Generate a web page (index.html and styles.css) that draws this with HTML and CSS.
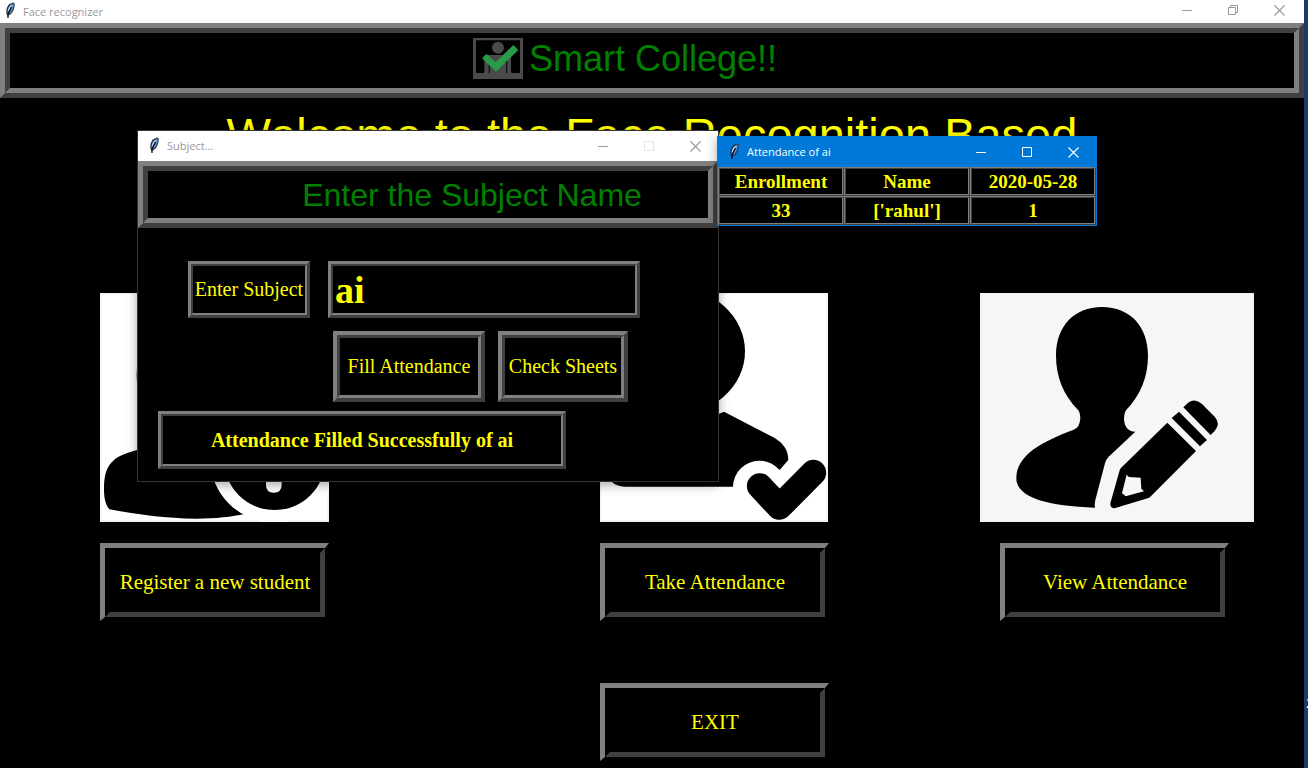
FILE: index.html
```html
<!DOCTYPE html>
<html lang="en">
<head>
<meta charset="utf-8">
<title>Face recognizer</title>
<link rel="stylesheet" href="styles.css">
</head>
<body>
<svg class="defs" aria-hidden="true">
  <symbol id="feather" viewBox="0 0 14 18">
    <path d="M4 13.500C2.500 9.500 3.500 5 6 2.500 8 .8 10 .5 11.500 .8 12.200 4.500 10.500 9.500 8 12 6.500 13.500 5.500 13.500 4 13.500z" fill="#26303f"/>
    <path d="M4.600 12C4 8 5.500 3.500 10.700 1.600 11 5 9.500 9 7 11.500z" fill="#5b96dc"/>
    <path d="M4.800 9.500C5 6.500 6.500 3.500 9.500 2.400L6 8.500z" fill="#c9def5"/>
    <path d="M8.500 5 5 12V16" fill="none" stroke="#000" stroke-width="1.200"/>
  </symbol>
  <symbol id="minimize" viewBox="0 0 11 11"><path d="M0 5.500h10" fill="none" stroke="currentColor"/></symbol>
  <symbol id="maximize" viewBox="0 0 11 11"><path d="M.5.500h9v9h-9z" fill="none" stroke="currentColor"/></symbol>
  <symbol id="restore" viewBox="0 0 11 11"><path d="M.5 2.500h7v7h-7zM2.500 2.500v-2h7v7h-2" fill="none" stroke="currentColor"/></symbol>
  <symbol id="close" viewBox="0 0 11 11"><path d="M.5.500l10 10M10.500.500l-10 10" fill="none" stroke="currentColor" stroke-width="1.100"/></symbol>
</svg>

<div class="desktop">
  <main class="main-window">
    <div class="titlebar titlebar-main">
      <svg class="feather"><use href="#feather"/></svg>
      <span class="caption">Face recognizer</span>
      <button class="control" aria-label="Minimize"><svg><use href="#minimize"/></svg></button>
      <button class="control" aria-label="Restore"><svg><use href="#restore"/></svg></button>
      <button class="control" aria-label="Close"><svg><use href="#close"/></svg></button>
    </div>

    <header class="ridge ridge-lg">
      <div class="ridge-inner brand">
        <svg class="logo" viewBox="96 54 150 123" aria-hidden="true">
          <path d="M96 54h150v123H96zM105 61V155q0 4 4 4h18q3 0 3-4V105h80v50q0 4 4 4h19q4 0 4-4V61z" fill="#4a4a4a" fill-rule="evenodd"/>
          <path d="M143 116h4v43h-4zM195 116h4v43h-4z" fill="#111"/>
          <circle cx="171" cy="83" r="18" fill="#4a4a4a"/>
          <path d="M123 115l14-13 27 25 53-52 15 15-67 65z" fill="#289b48"/>
        </svg>
        <h1 class="brand-name">Smart College!!</h1>
      </div>
    </header>

    <h2 class="welcome">Welcome to the Face Recognition Based</h2>

    <div class="actions">
      <section class="action">
        <svg class="picture" viewBox="30 -501 687 687" aria-hidden="true">
          <path d="M30-501h687v687H30z" fill="#f2f2f2"/>
          <path d="M35-496h677v676H35z" fill="#fff"/>
          <ellipse cx="300" cy="-255" rx="160" ry="200"/>
          <path d="M141-30C105-20 82-10 72 0 48 20 42 48 42 88c0 32 7 50 16 60 90 16 170 28 260 28 60 0 110-6 145-14V-60z"/>
          <circle cx="554" cy="-6" r="194" fill="#fff"/>
          <circle cx="554" cy="-2" r="152"/>
          <path d="M528 0h47v75q0 23-24 23-23 0-23-23z" fill="#fff"/>
        </svg>
        <button class="big-button"><span>Register a new student</span></button>
      </section>
      <section class="action">
        <svg class="picture" viewBox="510 -81 687 687" aria-hidden="true">
          <path d="M510-81h684v687H510z" fill="#f2f2f2"/>
          <path d="M514-77h675v677H514z" fill="#fff"/>
          <ellipse cx="726" cy="94" rx="219" ry="193"/>
          <path d="M700 300L864 283 882 275 1030 352Q1075 377 1075 420L1049 450Q1022 422 988 422A79 79 0 0 0 909 500H585Q560 500 543 484V400z"/>
          <path d="M989 498L1048 561 1150 458" fill="none" stroke="#000" stroke-width="77" stroke-linecap="round" stroke-linejoin="round"/>
        </svg>
        <button class="big-button"><span>Take Attendance</span></button>
      </section>
      <section class="action action-view">
        <svg class="picture picture-wide" viewBox="30 24 822 687" aria-hidden="true">
          <path d="M30 24h822v687H30z" fill="#f1f2f2"/>
          <path d="M34 28h813v678H34z" fill="#f6f6f6"/>
          <path d="M396 66C480 66 534 124 534 212 534 275 512 330 468 376Q462 384 462 398 462 438 496 440L416 515Q408 523 405 535L376 645Q373 655 375 668C240 664 139 640 139 580 139 510 215 470 311 434Q330 427 331 398 331 384 325 376C280 330 258 275 258 212 258 124 312 66 396 66z"/>
          <path d="M592 413L678 498 541 635Q538 638 533 640L436 669Q420 672 421 655L449 556Q450 551 455 547z"/>
          <path d="M470 569L456 624 467 634 522 619 514 611 512 578 477 576z" fill="#f6f6f6"/>
          <path d="M627 380L711 465 690 484 605 399zM640 367L648 359Q672 335 696 357L734 395Q753 416 734 438L722 450z"/>
        </svg>
        <button class="big-button"><span>View Attendance</span></button>
      </section>
      <button class="big-button exit-button"><span>EXIT</span></button>
    </div>
  </main>
  <aside class="strip"><span class="strip-text">2</span></aside>

  <section class="window subject-window">
    <div class="titlebar">
      <svg class="feather"><use href="#feather"/></svg>
      <span class="caption">Subject...</span>
      <button class="control" aria-label="Minimize"><svg><use href="#minimize"/></svg></button>
      <button class="control" aria-label="Maximize" disabled><svg><use href="#maximize"/></svg></button>
      <button class="control" aria-label="Close"><svg><use href="#close"/></svg></button>
    </div>
    <div class="ridge ridge-lg">
      <h2 class="ridge-inner subject-title">Enter the Subject Name</h2>
    </div>
    <form class="subject-form">
      <div class="row row-entry">
        <label class="ridge ridge-sm" for="subject"><span class="ridge-inner field-label">Enter Subject</span></label>
        <div class="ridge ridge-sm entry"><input class="ridge-inner entry-input" id="subject" type="text" value="ai"></div>
      </div>
      <div class="row row-buttons">
        <button class="ridge ridge-md fill-button" type="button"><span class="ridge-inner">Fill Attendance</span></button>
        <button class="ridge ridge-md check-button" type="button"><span class="ridge-inner">Check Sheets</span></button>
      </div>
      <div class="ridge ridge-sm status"><output class="ridge-inner status-text">Attendance Filled Successfully of ai</output></div>
    </form>
  </section>

  <section class="window sheet-window">
    <div class="titlebar titlebar-active">
      <svg class="feather"><use href="#feather"/></svg>
      <span class="caption">Attendance of ai</span>
      <button class="control" aria-label="Minimize"><svg><use href="#minimize"/></svg></button>
      <button class="control" aria-label="Maximize"><svg><use href="#maximize"/></svg></button>
      <button class="control" aria-label="Close"><svg><use href="#close"/></svg></button>
    </div>
    <table class="sheet">
      <tr><th><div>Enrollment</div></th><th><div>Name</div></th><th><div>2020-05-28</div></th></tr>
      <tr><td><div>33</div></td><td><div>['rahul']</div></td><td><div>1</div></td></tr>
    </table>
  </section>
</div>
</body>
</html>
```
FILE: styles.css
```css
* { box-sizing: border-box; }

body {
  margin: 0;
  background: #000;
  color: #ff0;
  font-family: "Liberation Serif", "Times New Roman", serif;
}

h1, h2 { margin: 0; font-weight: 400; }

button {
  margin: 0;
  padding: 0;
  background: #000;
  color: inherit;
  font: inherit;
}

.defs { display: none; }

.desktop {
  position: relative;
  display: flex;
  min-height: 100vh;
  overflow: hidden;
}

.main-window { flex: 1; min-width: 0; }

.strip {
  display: flex;
  align-items: flex-end;
  width: 4px;
  padding: 0 0 56px 2px;
  overflow: hidden;
  background: #1f3864;
}

.strip-text {
  color: #fff;
  font: 12px/16px "Open Sans", sans-serif;
}

/* Title bars */

.titlebar {
  display: flex;
  align-items: center;
  height: 30px;
  padding-left: 9px;
  background: #fff;
  color: #999;
  font: 11px/16px "Open Sans", sans-serif;
}

.titlebar-main { height: 23px; padding: 0 2px 2px 3px; }
.titlebar-active { background: #0078d7; color: #fff; }

.feather { width: 14px; height: 18px; }

.caption { flex: 1; padding-left: 6px; }

.titlebar-main .caption { padding-top: 2px; }

.control {
  display: flex;
  align-items: center;
  justify-content: center;
  width: 46px;
  height: 100%;
  border: 0;
  background: none;
}

.control svg { width: 11px; height: 11px; }
.control:disabled { color: #e5e5e5; }

/* Two-step ridge frames */

.ridge,
.ridge-inner { border-style: solid; }

.ridge {
  display: flex;
  border-color: #808080 #404040 #404040 #808080;
}

.ridge-inner {
  display: flex;
  flex: 1;
  align-items: center;
  justify-content: center;
  min-width: 0;
  border-color: #404040 #808080 #808080 #404040;
}

.ridge-lg, .ridge-lg > .ridge-inner { border-width: 5px; }
.ridge-md { border-width: 4px; }
.ridge-md > .ridge-inner { border-width: 3px; }
.ridge-sm { border-width: 3px; }
.ridge-sm > .ridge-inner { border-width: 2px; }

/* Main window */

.brand {
  gap: 6px;
  height: 65px;
  padding: 0 54px 4px 0;
}

.logo { width: 50px; height: 41px; }

.brand-name,
.subject-title,
.welcome { font-family: "Liberation Sans", Arial, sans-serif; }

.brand-name {
  color: #008000;
  font-size: 36px;
  line-height: 42px;
}

.welcome {
  height: 195px;
  padding-top: 10px;
  font-size: 47px;
  line-height: 54px;
  text-align: center;
  white-space: nowrap;
}

.actions {
  display: grid;
  grid-template-columns: 500fr 380fr 274fr;
  row-gap: 62px;
  padding: 0 50px 7px 100px;
}

.action {
  display: flex;
  flex-direction: column;
  align-items: flex-start;
  gap: 21px;
  min-width: 0;
}

.picture { width: 229px; height: 229px; }
.picture-wide { width: 274px; }
.action-view .big-button { margin-left: 20px; }

.big-button {
  display: flex;
  width: 229px;
  height: 78px;
  border-style: solid;
  border-width: 5px 4px 4px 5px;
  border-color: #808080 #000 #000 #808080;
  font-size: 21px;
  line-height: 24px;
}

.big-button span {
  display: flex;
  flex: 1;
  align-items: center;
  justify-content: center;
  align-self: stretch;
  padding-bottom: 2px;
  border: 5px solid;
  border-color: #000 #404040 #404040 #000;
}

.exit-button { grid-column: 2; }

/* Floating windows */

.window {
  position: absolute;
  background: #000;
  box-shadow: 0 3px 10px rgba(0, 0, 0, 0.35);
}

.subject-window {
  top: 130px;
  left: 137px;
  width: 582px;
  border: 1px solid #333;
}

.subject-title {
  height: 57px;
  padding-left: 88px;
  color: #008000;
  font-size: 32px;
  line-height: 38px;
}

.subject-form {
  padding: 33px 20px 12px;
  font-size: 20px;
  line-height: 24px;
}

.row { display: flex; }

.row-entry { gap: 18px; padding-left: 30px; height: 57px; }
.row-buttons { gap: 13px; padding: 13px 0 9px 175px; }

.field-label { width: 116px; padding-bottom: 2px; }

.entry { width: 312px; }

.entry-input {
  width: 100%;
  padding: 0 2px;
  border-radius: 0;
  outline: 0;
  background: #000;
  color: #ff0;
  font: bold 38px/44px "Liberation Serif", "Times New Roman", serif;
}

.fill-button, .check-button { height: 71px; }
.fill-button { width: 152px; }
.check-button { width: 130px; }
.fill-button .ridge-inner,
.check-button .ridge-inner { align-self: stretch; padding-bottom: 2px; }

.status { width: 408px; height: 58px; }
.status-text { font-weight: 700; }

.sheet-window {
  top: 136px;
  left: 717px;
  width: 380px;
  border: 1px solid #0078d7;
}

.sheet {
  width: 100%;
  border-spacing: 0;
  table-layout: fixed;
  font-size: 19px;
  font-weight: 700;
  line-height: 25px;
  text-align: center;
}

.sheet th, .sheet td {
  padding: 0;
  border: 1px solid;
  border-color: #808080 #404040 #404040 #808080;
}

.sheet div {
  border: 1px solid;
  border-color: #404040 #808080 #808080 #404040;
}
```
